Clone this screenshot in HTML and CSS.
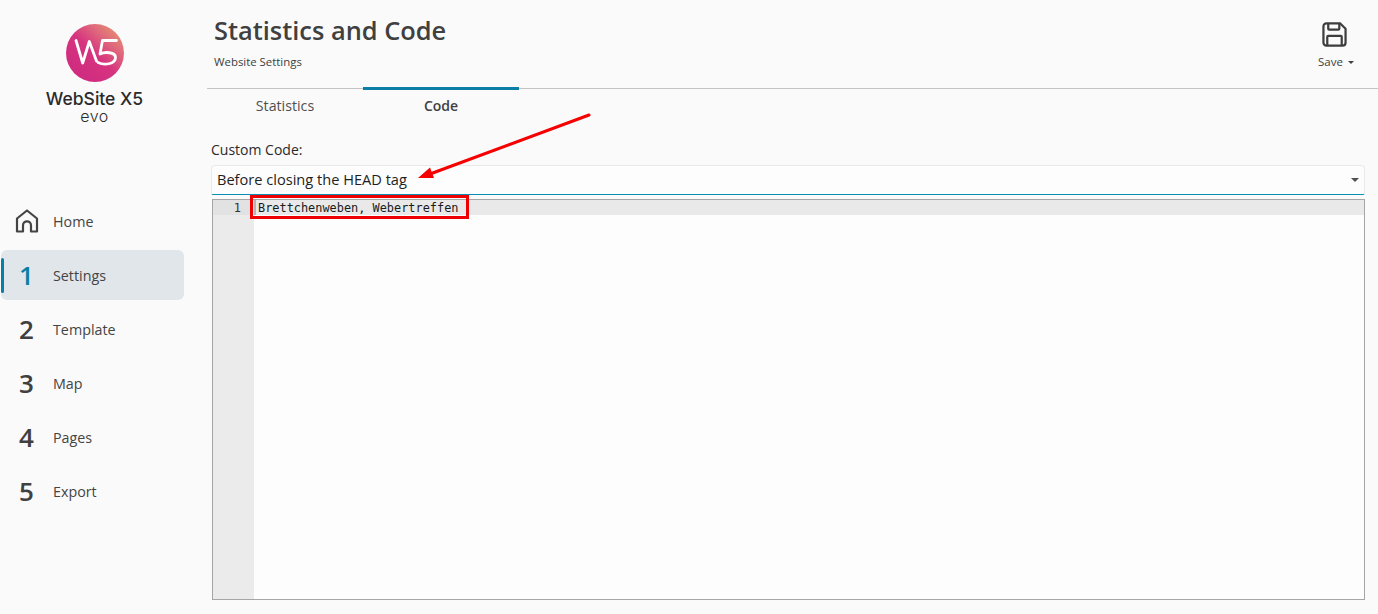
FILE: index.html
```html
<!DOCTYPE html>
<html lang="en">
<head>
<meta charset="utf-8">
<title>Statistics and Code</title>
<link rel="stylesheet" href="styles.css">
</head>
<body>
<div class="app">
  <aside class="sidebar">
    <div class="logo">
      <svg class="logo-mark" viewBox="0 0 58 58" width="58" height="58">
        <defs>
          <linearGradient id="lg" x1="0.1" y1="0.9" x2="0.85" y2="0.1">
            <stop offset="0" stop-color="#cf2a80"/>
            <stop offset="0.5" stop-color="#d6337f"/>
            <stop offset="0.8" stop-color="#df6a7c"/>
            <stop offset="1" stop-color="#e58a72"/>
          </linearGradient>
        </defs>
        <circle cx="29" cy="29" r="29" fill="url(#lg)"/>
        <path d="M10 16.500 L16.700 39 L23.300 17.500 L30.500 37" fill="none" stroke="#fff" stroke-width="2.800" stroke-linecap="round" stroke-linejoin="round"/>
        <path d="M50.500 16.500 H36.500 L34 30 C39 27.500 49.500 28 49.500 33.500 C49.500 40.500 38 41.500 32 38.500" fill="none" stroke="#fff" stroke-width="2.800" stroke-linecap="round" stroke-linejoin="round"/>
      </svg>
      <div class="logo-name">WebSite X5</div>
      <div class="logo-evo">evo</div>
    </div>
    <nav class="nav">
      <a class="nav-item">
        <span class="nav-icon">
          <svg viewBox="0 0 24 24" width="24" height="24" fill="none" stroke="#444" stroke-width="2.200" stroke-linejoin="round" stroke-linecap="round"><path d="M2 22.500 V9.500 L12 1.500 L22 9.500 V22.500 H16 V16.500 C16 11 8 11 8 16.500 V22.500 Z"/></svg>
        </span>
        <span class="nav-label">Home</span>
      </a>
      <a class="nav-item active"><span class="nav-icon">1</span><span class="nav-label">Settings</span></a>
      <a class="nav-item"><span class="nav-icon">2</span><span class="nav-label">Template</span></a>
      <a class="nav-item"><span class="nav-icon">3</span><span class="nav-label">Map</span></a>
      <a class="nav-item"><span class="nav-icon">4</span><span class="nav-label">Pages</span></a>
      <a class="nav-item"><span class="nav-icon">5</span><span class="nav-label">Export</span></a>
    </nav>
  </aside>
  <main class="main">
    <header class="header">
      <div class="titles">
        <h1 class="title">Statistics and Code</h1>
        <div class="subtitle">Website Settings</div>
      </div>
      <div class="save">
        <svg viewBox="0 0 26 26" width="25" height="25" fill="none" stroke="#3d3d3d" stroke-width="2.300" stroke-linejoin="round"><path d="M4.500 1.500 H19 L24.500 7 V21.500 A3 3 0 0 1 21.500 24.500 H4.500 A3 3 0 0 1 1.500 21.500 V4.500 A3 3 0 0 1 4.500 1.500 Z"/><path d="M6.500 1.500 V7 A1 1 0 0 0 7.500 8 H17 A1 1 0 0 0 18 7 V1.500"/><path d="M5.500 24.500 V15.500 A1 1 0 0 1 6.500 14.500 H19.500 A1 1 0 0 1 20.500 15.500 V24.500"/></svg>
        <div class="save-label">Save <span class="caret-small"></span></div>
      </div>
    </header>
    <div class="tabs">
      <div class="tab">Statistics</div>
      <div class="tab selected">Code</div>
    </div>
    <section class="content">
      <label class="field-label">Custom Code:</label>
      <div class="select">
        <span>Before closing the HEAD tag</span>
        <span class="caret"></span>
      </div>
      <div class="editor">
        <div class="gutter"><div class="line-no">1</div></div>
        <div class="code"><div class="code-line"><span class="code-text">Brettchenweben, Webertreffen</span></div></div>
      </div>
    </section>
  </main>
</div>
<div class="highlight-box"></div>
<svg class="arrow" viewBox="0 0 1378 614" width="1378" height="614">
  <line x1="589" y1="115" x2="430" y2="174" stroke="#f60000" stroke-width="3" stroke-linecap="round"/>
  <polygon points="418,178 430,167.500 434,178" fill="#f60000"/>
</svg>
</body>
</html>
```
FILE: styles.css
```css
* { box-sizing: border-box; }
html, body { margin: 0; padding: 0; height: 100%; overflow: hidden; }
body {
  background: #fafafa;
  color: #404040;
  font-family: "Open Sans", "Noto Sans", "Liberation Sans", sans-serif;
}
.app { display: flex; width: 1378px; height: 614px; }

.sidebar { width: 207px; flex: none; }
.logo {
  height: 196px;
  padding-top: 24px;
  display: flex;
  flex-direction: column;
  align-items: center;
  padding-right: 18px;
}
.logo-mark { display: block; }
.logo-name {
  margin-top: 8px;
  font-family: "Inter", "Liberation Sans", sans-serif;
  font-size: 17.500px;
  line-height: 18px;
  font-weight: 500;
  color: #2b2b2b;
  white-space: nowrap;
}
.logo-evo {
  font-family: "Inter", sans-serif;
  font-size: 16px;
  font-weight: 300;
  line-height: 16px;
  letter-spacing: 0.5px;
  color: #2b2b2b;
}

.nav { display: flex; flex-direction: column; padding-left: 1px; }
.nav-item {
  display: flex;
  align-items: center;
  width: 183px;
  height: 50px;
  margin-bottom: 4px;
  border-radius: 6px;
  position: relative;
}
.nav-icon {
  width: 52px;
  flex: none;
  text-align: center;
  font-size: 26px;
  line-height: 30px;
  font-weight: 600;
  color: #404040;
  display: flex;
  justify-content: center;
  padding-right: 1px;
}
.nav-label { font-size: 14.300px; line-height: 20px; color: #444; position: relative; top: 1px; }
.nav-item.active { background: #e1e6eb; }
.nav-item.active::before {
  content: "";
  position: absolute;
  left: 0;
  top: 8px;
  bottom: 7px;
  width: 3px;
  border-radius: 2px;
  background: #0a7ea4;
}
.nav-item.active .nav-icon { color: #0a7ea4; }
.nav-item.active .nav-label { font-weight: 500; }

.main { flex: 1; display: flex; flex-direction: column; min-width: 0; }
.header {
  height: 89px;
  flex: none;
  display: flex;
  justify-content: space-between;
  padding: 0 19px 0 7px;
  border-bottom: 1px solid #c4c4c4;
}
.title {
  margin: 11px 0 0;
  font-size: 25.400px;
  line-height: 38px;
  font-weight: 600;
  color: #404040;
}
.subtitle { margin-top: 5px; font-size: 11.400px; line-height: 16px; color: #404040; }
.save {
  width: 50px;
  padding-top: 22px;
  display: flex;
  flex-direction: column;
  align-items: center;
}
.save-label { margin-top: 7px; padding-left: 4px; font-size: 11.500px; line-height: 16px; white-space: nowrap; }
.caret-small {
  display: inline-block;
  margin-left: 2px;
  vertical-align: 2px;
  border-left: 3px solid transparent;
  border-right: 3px solid transparent;
  border-top: 3px solid #404040;
}

.tabs { display: flex; height: 36px; margin-top: -2px; flex: none; position: relative; padding-left: 0; }
.tab {
  width: 156px;
  padding-top: 5px;
  text-align: center;
  font-size: 14.200px;
  line-height: 22px;
  border-top: 3px solid transparent;
  color: #505050;
}
.tab.selected { border-top-color: #0a7ea4; font-size: 14px; font-weight: 600; color: #404040; }

.content { flex: 1; padding: 17px 13px 14px 4px; display: flex; flex-direction: column; min-height: 0; }
.field-label { font-size: 14px; line-height: 20px; color: #2a2a2a; height: 20px; display: block; }
.select {
  margin-top: 5px;
  height: 30px;
  display: flex;
  align-items: center;
  justify-content: space-between;
  padding: 0 5px 2px 5px;
  background: #fdfdfd;
  border: 1px solid #e9e9e9;
  border-bottom: 1px solid #0a8fb5;
  border-radius: 4px 4px 2px 2px;
  font-size: 14.600px;
  color: #1f1f1f;
}
.caret {
  margin-top: 2px;
  border-left: 4px solid transparent;
  border-right: 4px solid transparent;
  border-top: 4px solid #505050;
}
.editor {
  flex: 1;
  margin: 4px 0 0 1px;
  display: flex;
  border: 1px solid #a6a6a6;
  background: #fdfdfd;
  min-height: 0;
}
.gutter { width: 41px; flex: none; background: #ebebeb; }
.line-no {
  height: 15px;
  padding-right: 13px;
  text-align: right;
  background: #e2e2e2;
  font-family: "DejaVu Sans Mono", monospace;
  font-size: 11.900px;
  line-height: 16px;
  color: #333;
}
.code { flex: 1; min-width: 0; }
.code-line {
  height: 15px;
  background: #e9e9e9;
  border-left: 2px solid #b4b4b4;
  padding-left: 2px;
  font-family: "DejaVu Sans Mono", "Liberation Mono", monospace;
  font-size: 11.900px;
  line-height: 17px;
  color: #1a1a1a;
}

.highlight-box {
  position: absolute;
  left: 250px;
  top: 195px;
  width: 219px;
  height: 24px;
  border: 3px solid #ee0000;
}
.arrow { position: absolute; left: 0; top: 0; pointer-events: none; }
```
